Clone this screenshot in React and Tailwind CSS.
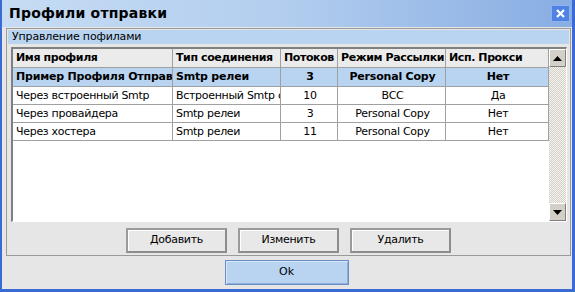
import React from 'react'

const cols = [
  { title: 'Имя профиля', w: 'w-[160px]', align: 'text-left' },
  { title: 'Тип соединения', w: 'w-[108px]', align: 'text-left' },
  { title: 'Потоков', w: 'w-[57px]', align: 'text-center' },
  { title: 'Режим Рассылки', w: 'w-[108px]', align: 'text-center' },
  { title: 'Исп. Прокси', w: 'w-[103px]', align: 'text-center' },
]

const rows = [
  ['Пример Профиля Отправки', 'Smtp релеи', '3', 'Personal Copy', 'Нет'],
  ['Через встроенный Smtp', 'Встроенный Smtp сервер', '10', 'BCC', 'Да'],
  ['Через провайдера', 'Smtp релеи', '3', 'Personal Copy', 'Нет'],
  ['Через хостера', 'Smtp релеи', '11', 'Personal Copy', 'Нет'],
]

function Btn({ children }) {
  return (
    <button className="w-[101px] h-[25px] border-2 border-t-[#9a9a9a] border-l-[#9a9a9a] border-r-[#8c8c8c] border-b-[#8c8c8c] bg-[#e8e8e8] text-[11px] tracking-[-0.3px] text-black shadow-[inset_1px_1px_0_#ffffff]">
      {children}
    </button>
  )
}

function ScrollArrow({ up }) {
  return (
    <div className="w-[17px] h-[18px] shrink-0 bg-[#d4d0c8] border border-t-white border-l-white border-r-[#808080] border-b-[#808080] flex items-center justify-center">
      <svg width="9" height="5" viewBox="0 0 9 5">
        {up ? <polygon points="4.5,0 9,5 0,5" fill="#000" /> : <polygon points="0,0 9,0 4.5,5" fill="#000" />}
      </svg>
    </div>
  )
}

export default function App() {
  return (
    <div
      className="w-[575px] h-[292px] bg-[#e6e6e6] border-l-2 border-r-[3px] border-b-[3px] border-[#3a6bd4] flex flex-col overflow-hidden"
      style={{ fontFamily: '"DejaVu Sans", Tahoma, sans-serif' }}
    >
      {/* Title bar */}
      <div className="h-[27px] shrink-0 flex items-center justify-between pl-[7px] pr-[2px] bg-gradient-to-r from-[#c6dcf4] via-[#b2cdee] to-[#88ade3]">
        <span className="text-[14px] font-bold text-black tracking-[0.2px]">Профили отправки</span>
        <div className="w-[19px] h-[17px] bg-[#4f82e3] border border-[#8fb2ee] flex items-center justify-center">
          <svg width="9" height="9" viewBox="0 0 9 9">
            <path d="M1 1L8 8M8 1L1 8" stroke="#fff" strokeWidth="2.2" />
          </svg>
        </div>
      </div>

      {/* Group box */}
      <div className="mt-[1px] ml-[4px] mr-[1px] h-[228px] border border-[#9a9a9a] flex flex-col">
        <div className="h-[14px] mx-[1px] mt-[1px] bg-[#b8d4f0] text-[11px] tracking-[-0.15px] leading-[14px] pl-[4px] text-black">
          Управление пофилами
        </div>

        {/* Grid */}
        <div className="ml-[4px] mr-[3px] mt-[3px] h-[175px] bg-white border-t-2 border-l-2 border-t-[#808080] border-l-[#808080] border-r border-b border-r-white border-b-white flex">
          <div className="flex-1 flex flex-col">
            <div className="flex h-[19px] bg-[#ebebeb] border-b border-[#a0a0a0]">
              {cols.map((c, i) => (
                <div
                  key={i}
                  className={`${c.w} shrink-0 border-r border-[#a0a0a0] text-[11px] font-bold tracking-[-0.4px] leading-[18px] pl-[3px] whitespace-nowrap overflow-hidden text-black`}
                >
                  {c.title}
                </div>
              ))}
            </div>
            {rows.map((r, ri) => (
              <div
                key={ri}
                className={`flex border-b border-[#a0a0a0] text-[11px] ${ri === 0 ? 'h-[19px] bg-[#b8d4f0] font-bold tracking-[-0.2px]' : 'h-[18px] bg-white tracking-[-0.3px]'}`}
              >
                {r.map((v, ci) => (
                  <div
                    key={ci}
                    className={`${cols[ci].w} ${cols[ci].align} shrink-0 border-r border-[#a0a0a0] leading-[17px] pl-[3px] pr-[1px] whitespace-nowrap overflow-hidden text-black`}
                  >
                    {v}
                  </div>
                ))}
              </div>
            ))}
          </div>
          {/* Scrollbar */}
          <div className="w-[17px] flex flex-col">
            <ScrollArrow up />
            <div className="flex-1 bg-[repeating-conic-gradient(#d4d0c8_0_25%,#f4f3f0_0_50%)] bg-[length:2px_2px]" />
            <ScrollArrow />
          </div>
        </div>

        <div className="flex justify-center gap-[11px] mt-[6px]">
          <Btn>Добавить</Btn>
          <Btn>Изменить</Btn>
          <Btn>Удалить</Btn>
        </div>
      </div>

      <div className="flex justify-center mt-[4px] pr-[1px]">
        <button className="w-[124px] h-[25px] bg-[#b8d4f0] border border-[#6a8cc4] text-[11px] text-black shadow-[inset_1px_1px_0_#d8e8f8,inset_-1px_-1px_0_#90b0dc]">
          Ok
        </button>
      </div>
    </div>
  )
}
